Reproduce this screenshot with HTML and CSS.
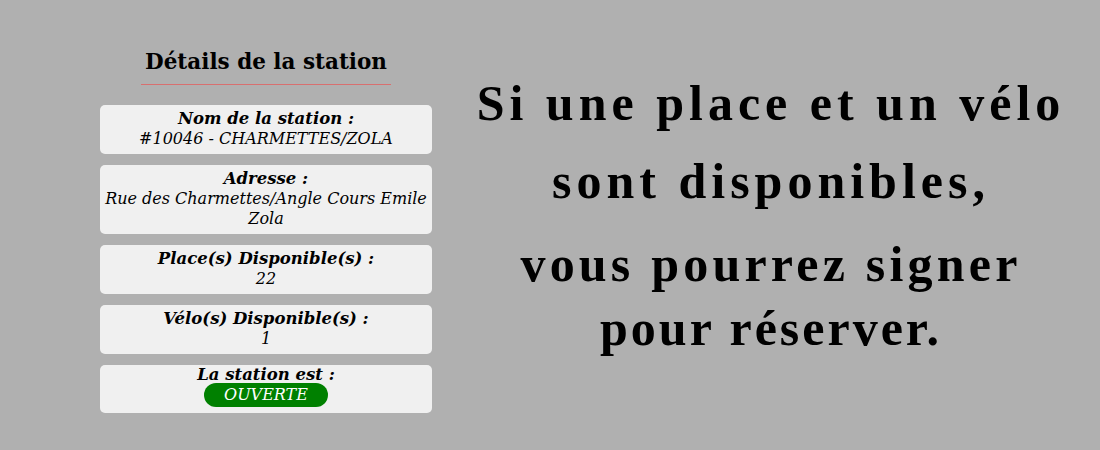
FILE: index.html
```html
<!DOCTYPE html>
<html lang="fr">
<head>
<meta charset="utf-8">
<title>Détails de la station</title>
<link rel="stylesheet" href="styles.css">
</head>
<body>
<div class="page">
  <section class="details">
    <h2 class="details-title">Détails de la station</h2>
    <div class="card">
      <div class="label">Nom de la station :</div>
      <div class="value">#10046 - CHARMETTES/ZOLA</div>
    </div>
    <div class="card">
      <div class="label">Adresse :</div>
      <div class="value">Rue des Charmettes/Angle Cours Emile Zola</div>
    </div>
    <div class="card">
      <div class="label">Place(s) Disponible(s) :</div>
      <div class="value">22</div>
    </div>
    <div class="card">
      <div class="label">Vélo(s) Disponible(s) :</div>
      <div class="value">1</div>
    </div>
    <div class="card card-status">
      <div class="label label-status">La station est :</div>
      <div class="value"><span class="badge">OUVERTE</span></div>
    </div>
  </section>
  <section class="message">
    <div class="line l1">Si une place et un vélo</div>
    <div class="line l2">sont disponibles,</div>
    <div class="line l3">vous pourrez signer</div>
    <div class="line l4">pour réserver.</div>
  </section>
</div>
</body>
</html>
```
FILE: styles.css
```css
html, body {
  margin: 0;
  padding: 0;
  background: #b0b0b0;
}
body {
  width: 1100px;
  height: 450px;
  overflow: hidden;
}
.page {
  display: flex;
  align-items: flex-start;
}
.details {
  width: 332px;
  margin-left: 100px;
  display: flex;
  flex-direction: column;
  gap: 11px;
  font-family: "DejaVu Serif", Georgia, serif;
  color: #000;
}
.details-title {
  align-self: center;
  width: 250px;
  margin: 49px 0 9px;
  padding: 0 0 9px;
  text-align: center;
  font-size: 21.5px;
  line-height: 26px;
  font-weight: bold;
  border-bottom: 1px solid #d86f6f;
}
.card {
  background: #f0f0f0;
  border-radius: 5px;
  padding: 4px 4px 5px;
  text-align: center;
  font-style: italic;
}
.label {
  font-weight: bold;
  font-size: 16.5px;
  line-height: 20px;
}
.value {
  font-size: 16px;
  line-height: 20px;
}
.card-status {
  padding: 2px 4px 6px;
}
.label-status {
  line-height: 16px;
}
.badge {
  display: inline-block;
  background: #008000;
  color: #fff;
  border-radius: 12px;
  padding: 0 20px;
  line-height: 24px;
  font-size: 16px;
}
.message {
  flex: 1;
  padding-left: 10px;
  text-align: center;
  font-family: "Liberation Serif", "Times New Roman", serif;
  font-weight: bold;
  font-size: 50px;
  letter-spacing: 5px;
  color: #000;
}
.line {
  line-height: 50px;
  white-space: nowrap;
}
.l1 { margin-top: 78px; }
.l2 { margin-top: 28px; }
.l3 { margin-top: 33px; letter-spacing: 4.2px; }
.l4 { margin-top: 14px; letter-spacing: 3px; }
```
